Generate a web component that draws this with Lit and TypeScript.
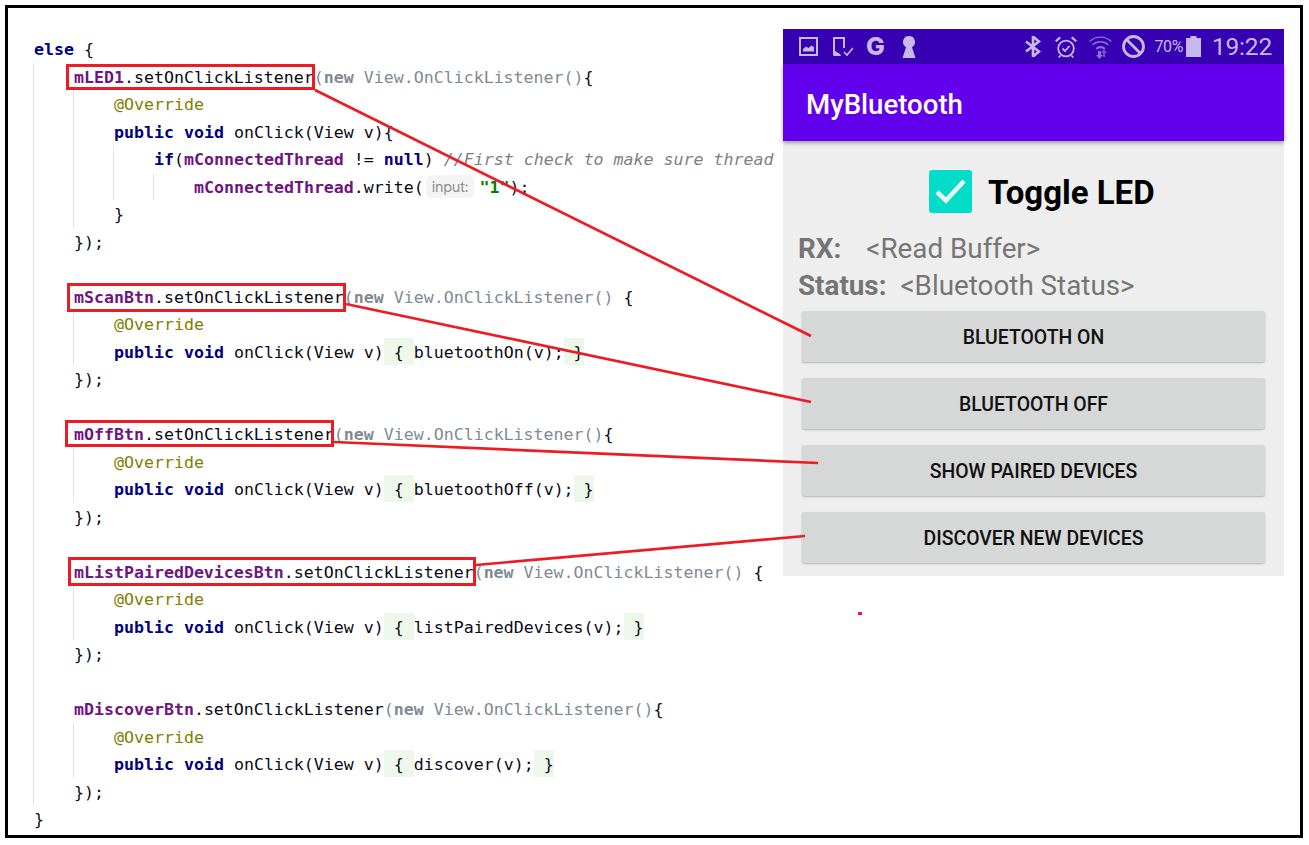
import { LitElement, html, css, svg } from "lit";
import { customElement } from "lit/decorators.js";

type Line = { g: number[]; c: unknown };

const F = (s: string) => html`<span class="f">${s}</span>`;
const K = (s: string) => html`<span class="k">${s}</span>`;
const N = (s: string) => html`<span class="n">${s}</span>`;
const H = (s: string) => html`<span class="hl">${s}</span>`;
const pub = html`${K("public")} ${K("void")} onClick(View v)`;
const ovr = html`<span class="a">@Override</span>`;
const anon = (end: string) => html`<span class="gr">(${N("new")} View.OnClickListener()</span>${end}`;
const fold = (s: string) => html`${pub}${H(" { ")}${s}${H(" }")}`;

const LINES: Line[] = [
  { g: [], c: html`${K("else")} {` },
  { g: [1], c: html`${F("mLED1")}.setOnClickListener${anon("{")}` },
  { g: [1, 1], c: ovr },
  { g: [1, 1], c: html`${pub}{` },
  { g: [1, 1, 1], c: html`${K("if")}(${F("mConnectedThread")} != ${K("null")}) <span class="cm">//First check to make sure thread</span>` },
  { g: [1, 1, 1, 1], c: html`${F("mConnectedThread")}.write(<span class="hint">input:</span><span class="s">"1"</span>);` },
  { g: [1, 1], c: "}" },
  { g: [1], c: "});" },
  { g: [1], c: "" },
  { g: [1], c: html`${F("mScanBtn")}.setOnClickListener${anon(" {")}` },
  { g: [1, 1], c: ovr },
  { g: [1, 1], c: fold("bluetoothOn(v);") },
  { g: [1], c: "});" },
  { g: [1], c: "" },
  { g: [1], c: html`${F("mOffBtn")}.setOnClickListener${anon("{")}` },
  { g: [1, 1], c: ovr },
  { g: [1, 1], c: fold("bluetoothOff(v);") },
  { g: [1], c: "});" },
  { g: [1], c: "" },
  { g: [1], c: html`${F("mListPairedDevicesBtn")}.setOnClickListener${anon(" {")}` },
  { g: [1, 1], c: ovr },
  { g: [1, 1], c: fold("listPairedDevices(v);") },
  { g: [1], c: "});" },
  { g: [1], c: "" },
  { g: [1], c: html`${F("mDiscoverBtn")}.setOnClickListener${anon("{")}` },
  { g: [1, 1], c: ovr },
  { g: [1, 1], c: fold("discover(v);") },
  { g: [1], c: "});" },
  { g: [], c: "}" },
];

const INDENT = [0, 1, 2, 2, 3, 4, 2, 1, 0, 1, 2, 2, 1, 0, 1, 2, 2, 1, 0, 1, 2, 2, 1, 0, 1, 2, 2, 1, 0];

const BOXES = [
  [67.5, 65.5, 246, 23],
  [68.5, 284.5, 276, 26],
  [66.5, 421.5, 266, 24],
  [69.5, 558.5, 405, 26],
];
const ARROWS = [
  [315, 90, 811, 336],
  [346, 304, 811, 402],
  [334, 442, 818, 463],
  [476, 565, 805, 536],
];

@customElement("app-root")
export class AppRoot extends LitElement {
  static styles = css`
    :host { display: block; position: relative; width: 1309px; height: 845px; background: #fff; overflow: hidden; }
    .frame { box-sizing: border-box; width: 1298px; height: 833px; margin: 5px 0 0 5px; border: 3px solid #000; display: flex; align-items: flex-start; }
    .code { width: 750px; margin: 27.2px 0 0 25px; font: 16.6px/27.5px "DejaVu Sans Mono", monospace; color: #0a0a14; }
    .line { display: flex; height: 27.5px; white-space: pre; }
    .cell { width: 40px; flex: none; box-sizing: border-box; }
    .guide { border-left: 1px solid #e3e3e3; }
    .txt { display: block; padding-left: 1px; line-height: 29.5px; }
    .f { color: #70147f; font-weight: 700; }
    .k { color: #000080; font-weight: 700; }
    .n { font-weight: 700; }
    .gr { color: #808a93; }
    .a { color: #808000; }
    .cm { color: #808080; font-style: italic; }
    .s { color: #008000; font-weight: 700; }
    .hl { display: inline-block; height: 27px; line-height: 29px; background: #edf8ea; vertical-align: top; }
    .hint { display: inline-block; height: 23px; line-height: 23px; margin: 2px 5px 0 2px; padding: 0 6px; vertical-align: top; background: #f4f4f4; border-radius: 5px; color: #8f8f8f; font: 14.5px/23px Inter, "Noto Sans", sans-serif; letter-spacing: -0.3px; }

    .phone { width: 501px; height: 547px; margin-top: 21px; flex: none; background: #eee; font-family: Roboto, sans-serif; display: flex; flex-direction: column; }
    .status { height: 35px; flex: none; background: #3700b3; color: #c7b9ec; display: flex; align-items: center; padding: 0 12px 0 16px; }
    .status svg { display: block; flex: none; fill: currentColor; }
    .gl { font: 800 25px/35px Inter, Roboto, sans-serif; width: 21px; margin: 0 16px 0 12px; text-align: center; }
    .pct { font: 400 16px/35px Roboto, sans-serif; margin: 0 3px 0 9px; letter-spacing: -0.4px; }
    .time { font: 400 24.5px/35px Roboto, sans-serif; margin-left: 11px; letter-spacing: -0.2px; }
    .left { display: flex; align-items: center; }
    .spread { flex: 1; }
    .i1 { margin-right: 15px; }
    .i3 { margin-right: 14px; }
    .i4 { margin-right: 12px; }
    .i5 { margin-right: 10px; opacity: .62; }
    .bar { height: 77px; flex: none; background: #6200ee; color: #fff; font: 500 27.6px/81px Roboto, sans-serif; padding-left: 23px; box-shadow: 0 2px 4px rgba(0, 0, 0, .35); position: relative; }
    .toggle { display: flex; align-items: flex-start; gap: 16px; padding: 29px 0 0 146px; height: 43px; flex: none; }
    .check { width: 43px; height: 43px; border-radius: 3px; background: #02dcc8; display: block; flex: none; }
    .tl { height: 43px; font: 700 33px/45px Roboto, sans-serif; color: #000; }
    .rows { margin: 16.5px 0 7.500px 15px; color: #757575; font-size: 27.8px; line-height: 37px; }
    .rows div { display: flex; }
    .rows b { font-weight: 700; }
    .rx { margin-right: 25px; }
    .st { margin-right: 14px; }
    .btns { display: flex; flex-direction: column; gap: 16px; margin-left: 19px; width: 463px; }
    .btn { height: 51px; background: #d6d7d7; border-radius: 3px; box-shadow: 0 1px 2px rgba(0, 0, 0, .25); color: #111; font: 500 19.4px/53px Roboto, sans-serif; text-align: center; }
    .over { position: absolute; left: 0; top: 0; pointer-events: none; }
  `;

  private icons() {
    return html`
      <div class="left">
        <svg class="i1" width="19" height="19" viewBox="0 0 19 19"><path fill-rule="evenodd" d="M0 0h19v19H0zM2 2v15h15V2z"/><path d="M4 14.500v-2.500l3-2.500 2.500 1.500 3-2.500 2.500 1.500v4.500z"/></svg>
        <svg width="20" height="20" viewBox="0 0 20 20"><path fill="none" stroke="currentColor" stroke-width="2" d="M1 14V1h10v10"/><path d="M0 14h2l5 3 1 2H1l-1-1z"/><path fill="none" stroke="currentColor" stroke-width="1.700" d="M11 15l3 3 6-7"/></svg>
        <span class="gl">G</span>
        <svg width="14" height="22" viewBox="0 0 14 22"><path d="M7 0a6 6 0 0 1 3 11.200L13.500 22H.5L4 11.200A6 6 0 0 1 7 0z"/></svg>
      </div>
      <span class="spread"></span>
      <svg class="i3" width="16" height="21" viewBox="0 0 16 21"><path fill="none" stroke="currentColor" stroke-width="2.600" d="M1 5.500l13 10-6 5V.5l6 5-13 10"/></svg>
      <svg class="i4" width="22" height="22" viewBox="0 0 22 22"><circle cx="11" cy="12.500" r="7.800" fill="none" stroke="currentColor" stroke-width="1.800"/><path fill="none" stroke="currentColor" stroke-width="1.800" d="M7.500 12.500l2.500 2.500 4.500-5"/><path d="M0 4.500L4.500.5l1.500 1.700L1.500 6zM22 4.500L17.500.5 16 2.200 20.500 6zM5 19l-2 2 1.200 1 2-2zM17 19l2 2-1.200 1-2-2z"/></svg>
      <svg class="i5" width="23" height="24" viewBox="0 0 23 24"><g fill="none" stroke="currentColor" stroke-width="1.400"><path d="M.7 6.500a15.500 15.500 0 0 1 21.600 0"/><path d="M3.700 9.800a11.500 11.500 0 0 1 15.600 0"/></g><path d="M6.500 13a7.500 7.500 0 0 1 10 0l-1.500 1.800a5 5 0 0 0-7 0z"/><path d="M9 16h3v4h2l-3.500 4L7 20h2z"/><path d="M15 14l3 4h-2v4h-2v-4h-2z" opacity=".7"/></svg>
      <svg width="23" height="23" viewBox="0 0 23 23"><circle cx="11.500" cy="11.500" r="10" fill="none" stroke="currentColor" stroke-width="2.800"/><path stroke="currentColor" stroke-width="2.800" d="M4.500 4.500l14 14"/></svg>
      <span class="pct">70%</span>
      <svg width="15" height="21" viewBox="0 0 15 21"><path d="M4.500 0h6v2h4.500v19H0V2h4.500z"/></svg>
      <span class="time">19:22</span>
    `;
  }

  render() {
    return html`
      <div class="frame">
        <div class="code">
          ${LINES.map((l, i) => html`
            <div class="line">
              ${Array.from({ length: Math.max(INDENT[i], l.g.length) }, (_, k) =>
                html`<span class="cell ${k < l.g.length ? "guide" : ""}"></span>`)}
              <span class="txt">${l.c}</span>
            </div>`)}
        </div>
        <div class="phone">
          <div class="status">${this.icons()}</div>
          <div class="bar">MyBluetooth</div>
          <div class="toggle">
            <svg class="check" viewBox="0 0 43 43"><path fill="none" stroke="#e9f5f2" stroke-width="4.600" d="M8 22l9 8.500L35 11"/></svg>
            <span class="tl">Toggle LED</span>
          </div>
          <div class="rows">
            <div><b class="rx">RX:</b><span>&lt;Read Buffer&gt;</span></div>
            <div><b class="st">Status:</b><span>&lt;Bluetooth Status&gt;</span></div>
          </div>
          <div class="btns">
            <div class="btn">BLUETOOTH ON</div>
            <div class="btn">BLUETOOTH OFF</div>
            <div class="btn">SHOW PAIRED DEVICES</div>
            <div class="btn">DISCOVER NEW DEVICES</div>
          </div>
        </div>
      </div>
      <svg class="over" width="1309" height="845" viewBox="0 0 1309 845">
        ${BOXES.map(([x, y, w, h]) => svg`<rect x=${x} y=${y} width=${w} height=${h} fill="none" stroke="#ed1c24" stroke-width="3"/>`)}
        ${ARROWS.map(([a, b, c, d]) => svg`<line x1=${a} y1=${b} x2=${c} y2=${d} stroke="#ed1c24" stroke-width="2.700"/>`)}
        <rect x="858" y="612" width="4" height="3" fill="#ed1c24"/>
      </svg>
    `;
  }
}
